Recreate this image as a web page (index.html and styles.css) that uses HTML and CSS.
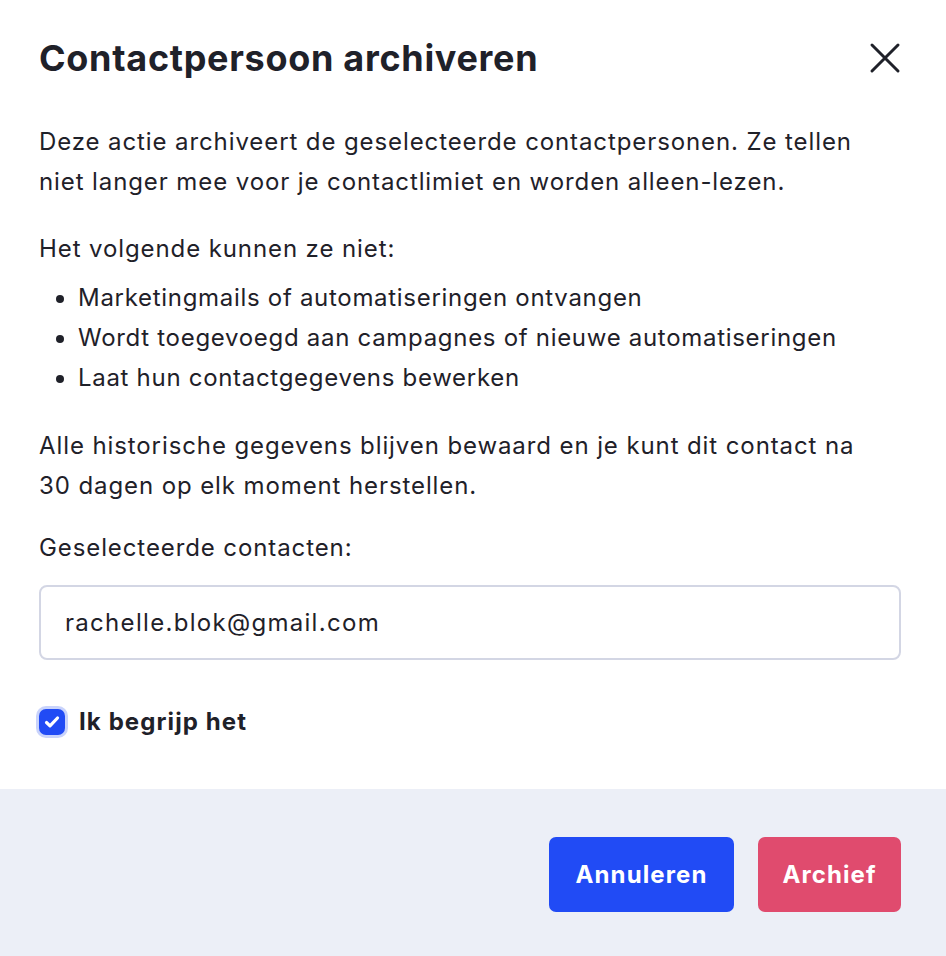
FILE: index.html
```html
<!DOCTYPE html>
<html lang="nl">
<head>
<meta charset="utf-8">
<title>Contactpersoon archiveren</title>
<link rel="stylesheet" href="styles.css">
</head>
<body>
<div class="modal">
  <div class="body">
    <div class="header">
      <h1 class="title">Contactpersoon archiveren</h1>
      <button class="close" aria-label="Sluiten">
        <svg width="32" height="32" viewBox="0 0 32 32"><path d="M3 3 L29 29 M29 3 L3 29" stroke="#1f2129" stroke-width="3" stroke-linecap="round"/></svg>
      </button>
    </div>
    <p class="text intro">Deze actie archiveert de geselecteerde contactpersonen. Ze tellen niet langer mee voor je contactlimiet en worden alleen-lezen.</p>
    <p class="text sub">Het volgende kunnen ze niet:</p>
    <ul class="list">
      <li>Marketingmails of automatiseringen ontvangen</li>
      <li>Wordt toegevoegd aan campagnes of nieuwe automatiseringen</li>
      <li>Laat hun contactgegevens bewerken</li>
    </ul>
    <p class="text">Alle historische gegevens blijven bewaard en je kunt dit contact na 30 dagen op elk moment herstellen.</p>
    <p class="text label">Geselecteerde contacten:</p>
    <div class="field">rachelle.blok@gmail.com</div>
    <label class="check">
      <span class="box"><svg width="20" height="20" viewBox="0 0 20 20"><path d="M4.5 10.5 L8 13.8 L15.5 6" fill="none" stroke="#fff" stroke-width="3.2" stroke-linecap="round" stroke-linejoin="round"/></svg></span>
      <span class="check-label">Ik begrijp het</span>
    </label>
  </div>
  <div class="footer">
    <button class="btn primary">Annuleren</button>
    <button class="btn danger">Archief</button>
  </div>
</div>
</body>
</html>
```
FILE: styles.css
```css
* { box-sizing: border-box; }
html, body { margin: 0; padding: 0; background: #fff; }
body { font-family: Inter, sans-serif; color: #1f2129; }
.modal { width: 946px; height: 956px; display: flex; flex-direction: column; }
.body { padding: 34px 45px 0 39px; flex: 1; }
.header { display: flex; justify-content: space-between; align-items: center; height: 48px; }
.title { margin: 0; font-size: 36px; font-weight: 700; letter-spacing: 0.7px; }
.close { background: none; border: 0; padding: 0; width: 32px; height: 32px; margin-right: 0; }
.text { margin: 0; padding-right: 12px; font-size: 24px; line-height: 40px; letter-spacing: 0.9px; }
.intro { margin-top: 40px; }
.sub { margin-top: 27px; }
.list { margin: 9px 0 0; padding-left: 39px; font-size: 24px; line-height: 40px; letter-spacing: 0.7px; }
.list + .text { margin-top: 28px; }
.label { margin-top: 22px; }
.field { margin-top: 17px; height: 75px; border: 2px solid #d3d6e4; border-radius: 8px; font-size: 24px; letter-spacing: 1.3px; padding: 0 24px; display: flex; align-items: center; }
.check { display: flex; align-items: center; gap: 14px; margin-top: 47px; }
.box { width: 26px; height: 26px; border-radius: 7px; background: #214bf5; box-shadow: 0 0 0 3px #c9d3fb; display: flex; align-items: center; justify-content: center; }
.check-label { font-size: 24px; font-weight: 700; letter-spacing: 1.1px; }
.footer { height: 167px; background: #eceff7; display: flex; justify-content: flex-end; align-items: flex-start; gap: 24px; padding: 48px 45px 0 0; }
.btn { border: 0; border-radius: 7px; height: 75px; font-family: inherit; font-size: 24px; font-weight: 700; color: #fff; padding: 0; letter-spacing: 1.1px; }
.primary { background: #214bf5; width: 185px; }
.danger { background: #e04b6e; width: 143px; }
```
